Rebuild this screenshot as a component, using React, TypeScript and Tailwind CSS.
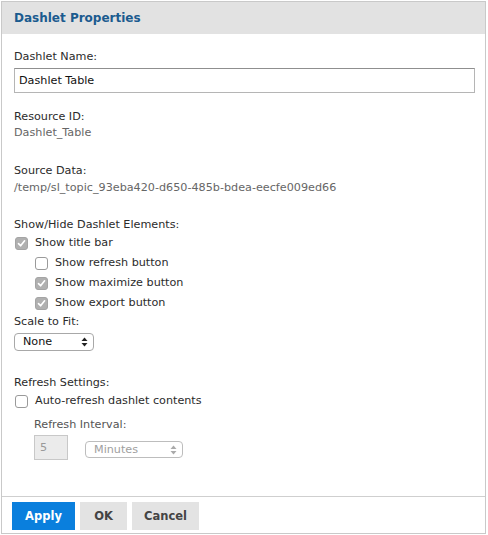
import React from 'react';

const font = { fontFamily: '"DejaVu Sans", Verdana, sans-serif' };

const Check: React.FC<{ checked?: boolean }> = ({ checked }) =>
  checked ? (
    <span className="w-[13px] h-[13px] rounded-[3px] bg-[#b0b0b0] border border-[#a4a4a4] flex items-center justify-center shrink-0">
      <svg width="9" height="9" viewBox="0 0 9 9">
        <path d="M1.5 4.6 L3.6 6.8 L7.6 1.8" fill="none" stroke="#fff" strokeWidth="1.6" strokeLinecap="round" strokeLinejoin="round" />
      </svg>
    </span>
  ) : (
    <span className="w-[13px] h-[13px] rounded-[3px] bg-white border border-[#9a9a9a] shrink-0" />
  );

const Arrows: React.FC<{ color: string }> = ({ color }) => (
  <svg width="7" height="10" viewBox="0 0 7 10">
    <path d="M0.5 4 L3.5 0.5 L6.5 4 Z" fill={color} />
    <path d="M0.5 6 L3.5 9.5 L6.5 6 Z" fill={color} />
  </svg>
);

const Row: React.FC<{ checked?: boolean; indent?: boolean; label: string }> = ({ checked, indent, label }) => (
  <div className={`h-[20px] flex items-center gap-[7px] ${indent ? 'pl-[21px]' : 'pl-[1px]'}`}>
    <Check checked={checked} />
    <span>{label}</span>
  </div>
);

export default function App() {
  return (
    <div className="w-[488px] h-[535px] bg-white pt-[1px] pl-[1px]" style={font}>
      <div className="w-[485px] h-[533px] border border-[#c9c9c9] flex flex-col text-[11.2px] leading-[16px] text-[#2b2b2b]">
        <div className="h-[32px] bg-[#e2e2e2] flex items-center pl-[12px] shrink-0">
          <span className="text-[12px] font-bold text-[#1b5b8f]">Dashlet Properties</span>
        </div>

        <div className="flex-1 pl-[12px] pt-[15px]">
          <div>Dashlet Name:</div>
          <div className="mt-[3px] w-[461px] h-[25px] border border-[#b5b5b5] border-t-[#8f8f8f] flex items-center pl-[4px] text-[#111]">
            Dashlet Table
          </div>

          <div className="mt-[16px]">Resource ID:</div>
          <div className="text-[#666]">Dashlet_Table</div>

          <div className="mt-[22px]">Source Data:</div>
          <div className="mt-[1px] text-[#666]">/temp/sl_topic_93eba420-d650-485b-bdea-eecfe009ed66</div>

          <div className="mt-[21px]">Show/Hide Dashlet Elements:</div>
          <Row checked label="Show title bar" />
          <Row indent label="Show refresh button" />
          <Row indent checked label="Show maximize button" />
          <Row indent checked label="Show export button" />

          <div className="mt-[1px]">Scale to Fit:</div>
          <div className="mt-[3px] w-[80px] h-[18px] rounded-[4px] border border-[#a8a8a8] bg-white flex items-center justify-between pl-[8px] pr-[5px] text-[#111]">
            <span>None</span>
            <Arrows color="#222" />
          </div>

          <div className="mt-[24px]">Refresh Settings:</div>
          <Row label="Auto-refresh dashlet contents" />

          <div className="pl-[20px]">
            <div className="mt-[6px] text-[#555]">Refresh Interval:</div>
            <div className="mt-[2px] flex items-center gap-[17px]">
              <div className="w-[34px] h-[25px] border border-[#c8c8c8] bg-[#ebebeb] flex items-center pl-[5px] text-[#999]">
                5
              </div>
              <div className="mt-[4px] w-[98px] h-[17px] rounded-[4px] border border-[#bdbdbd] bg-white flex items-center justify-between pl-[8px] pr-[5px] text-[#a0a0a0]">
                <span>Minutes</span>
                <Arrows color="#aaa" />
              </div>
            </div>
          </div>
        </div>

        <div className="h-[37px] border-t border-[#cfcfcf] flex items-start gap-[5px] pl-[10px] pt-[5px] shrink-0">
          <button className="w-[63px] h-[28px] bg-[#0a7fdd] text-white font-bold text-[11.5px]">Apply</button>
          <button className="w-[47px] h-[28px] bg-[#e3e3e3] text-[#444] font-bold text-[11.5px]">OK</button>
          <button className="w-[67px] h-[28px] bg-[#e3e3e3] text-[#444] font-bold text-[11.5px]">Cancel</button>
        </div>
      </div>
    </div>
  );
}
